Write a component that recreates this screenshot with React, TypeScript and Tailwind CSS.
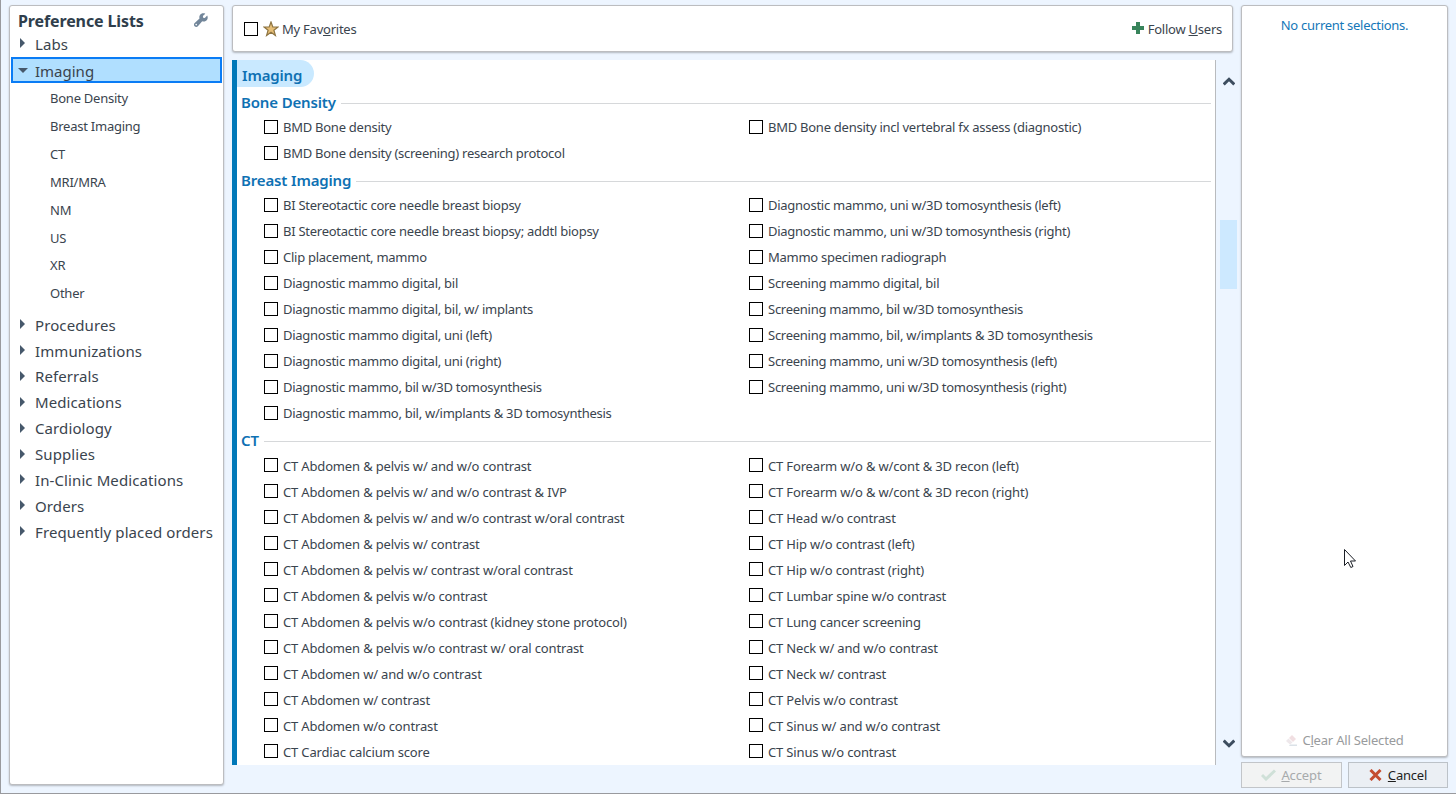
import React from "react";

const boneLeft = ["BMD Bone density", "BMD Bone density (screening) research protocol"];
const boneRight = ["BMD Bone density incl vertebral fx assess (diagnostic)"];
const breastLeft = [
  "BI Stereotactic core needle breast biopsy",
  "BI Stereotactic core needle breast biopsy; addtl biopsy",
  "Clip placement, mammo",
  "Diagnostic mammo digital, bil",
  "Diagnostic mammo digital, bil, w/ implants",
  "Diagnostic mammo digital, uni (left)",
  "Diagnostic mammo digital, uni (right)",
  "Diagnostic mammo, bil w/3D tomosynthesis",
  "Diagnostic mammo, bil, w/implants & 3D tomosynthesis",
];
const breastRight = [
  "Diagnostic mammo, uni w/3D tomosynthesis (left)",
  "Diagnostic mammo, uni w/3D tomosynthesis (right)",
  "Mammo specimen radiograph",
  "Screening mammo digital, bil",
  "Screening mammo, bil w/3D tomosynthesis",
  "Screening mammo, bil, w/implants & 3D tomosynthesis",
  "Screening mammo, uni w/3D tomosynthesis (left)",
  "Screening mammo, uni w/3D tomosynthesis (right)",
];
const ctLeft = [
  "CT Abdomen & pelvis w/ and w/o contrast",
  "CT Abdomen & pelvis w/ and w/o contrast & IVP",
  "CT Abdomen & pelvis w/ and w/o contrast w/oral contrast",
  "CT Abdomen & pelvis w/ contrast",
  "CT Abdomen & pelvis w/ contrast w/oral contrast",
  "CT Abdomen & pelvis w/o contrast",
  "CT Abdomen & pelvis w/o contrast (kidney stone protocol)",
  "CT Abdomen & pelvis w/o contrast w/ oral contrast",
  "CT Abdomen w/ and w/o contrast",
  "CT Abdomen w/ contrast",
  "CT Abdomen w/o contrast",
  "CT Cardiac calcium score",
];
const ctRight = [
  "CT Forearm w/o & w/cont & 3D recon (left)",
  "CT Forearm w/o & w/cont & 3D recon (right)",
  "CT Head w/o contrast",
  "CT Hip w/o contrast (left)",
  "CT Hip w/o contrast (right)",
  "CT Lumbar spine w/o contrast",
  "CT Lung cancer screening",
  "CT Neck w/ and w/o contrast",
  "CT Neck w/ contrast",
  "CT Pelvis w/o contrast",
  "CT Sinus w/ and w/o contrast",
  "CT Sinus w/o contrast",
];
const children = ["Bone Density", "Breast Imaging", "CT", "MRI/MRA", "NM", "US", "XR", "Other"];
const lists = [
  "Procedures",
  "Immunizations",
  "Referrals",
  "Medications",
  "Cardiology",
  "Supplies",
  "In-Clinic Medications",
  "Orders",
  "Frequently placed orders",
];

function Box() {
  return <span className="size-[14px] shrink-0 border border-black bg-white" />;
}

function Option({ label, low }: { label: string; low?: boolean }) {
  return (
    <label className="flex h-[26px] items-center gap-[5px]">
      <Box />
      <span className={low ? "pt-px tracking-[-0.16px]" : "pb-px tracking-[-0.26px]"}>{label}</span>
    </label>
  );
}

function Section({ title, left, right, low }: { title: string; left: string[]; right: string[]; low?: boolean }) {
  return (
    <section>
      <h3 className="flex h-[26px] items-center gap-[5px] pl-1 pt-px text-[15px] font-semibold tracking-[-0.15px] text-[#0f71b3]">
        {title}
        <span className="mt-1 h-px flex-1 bg-[#d6d8da]" />
      </h3>
      <div className="grid grid-cols-[485px_1fr] pl-[27px]">
        <div>{left.map((t) => <Option key={t} label={t} low={low} />)}</div>
        <div>{right.map((t) => <Option key={t} label={t} low={low} />)}</div>
      </div>
    </section>
  );
}

function Arrow() {
  return (
    <svg width="5" height="10" viewBox="0 0 5 10" className="mb-px shrink-0">
      <path d="M0 0L5 5L0 10Z" fill="#46586b" />
    </svg>
  );
}

function ListItem({ label }: { label: string }) {
  return (
    <li className="flex h-[25.88px] items-center gap-[10px] pl-[10px] text-[15px] tracking-[0.1px]">
      <Arrow />
      <span>{label}</span>
    </li>
  );
}

function Chevron({ down }: { down?: boolean }) {
  return (
    <svg width="12" height="9" viewBox="0 0 12 9">
      <path d={down ? "M.7 1.5L6 6.7L11.3 1.5" : "M.7 7.5L6 2.3L11.3 7.5"} fill="none" stroke="#3d4d5f" strokeWidth="3" />
    </svg>
  );
}

export default function App() {
  return (
    <div className="relative flex h-[794px] w-[1456px] overflow-hidden border-b border-l border-[#999a9e] bg-[#edf5ff] pl-2 pt-[5px] font-['Noto_Sans',sans-serif] text-[13px] leading-[18px] tracking-[-0.24px] whitespace-nowrap text-[#3a444e]">
      <aside className="h-[780px] w-[215px] shrink-0 rounded-[3px] border border-[#bcbdc0] bg-white shadow-[0_1px_2px_rgba(0,0,0,0.25)]">
        <div className="flex h-[25px] items-center justify-between pl-2 pr-[15px] pt-1">
          <h2 className="text-base font-bold tracking-[-0.12px] text-[#2f3e4c]">Preference Lists</h2>
          <svg width="14" height="14" viewBox="0 0 14 14" className="mb-0.5">
            <path d="M13.2 2.5L10.8 4.9L9.1 4.7L8.9 3L11.3.7C9.4-.2 7 .3 6 1.9C5.2 3.1 5.2 4.3 5.5 5.4L.7 9.9C-.4 11-.3 12.4.6 13.3C1.6 14.2 3 14.2 3.9 13.2L8.2 8.3C10 8.9 12.1 8.4 13.1 6.8C13.9 5.5 13.9 3.8 13.2 2.5ZM2.2 12.4A.8.8 0 1 1 2.2 10.8A.8.8 0 0 1 2.2 12.4Z" fill="#72869a" />
          </svg>
        </div>
        <ul>
          <ListItem label="Labs" />
        </ul>
        <div className="mx-px flex h-[26px] items-center gap-[7px] border-2 border-[#0a7cf5] bg-[#b0dfff] pl-[5px] pt-[2px] text-[15px] tracking-normal">
          <svg width="10" height="5" viewBox="0 0 10 5" className="mb-px">
            <path d="M0 0H10L5 5Z" fill="#46586b" />
          </svg>
          Imaging
        </div>
        <ul className="pt-px">
          {children.map((c) => (
            <li key={c} className="flex h-[27.86px] items-center pl-10 pt-px">{c}</li>
          ))}
        </ul>
        <ul className="pt-[5px]">
          {lists.map((l) => <ListItem key={l} label={l} />)}
        </ul>
      </aside>

      <main className="ml-2 w-[1001px] shrink-0">
        <header className="flex h-[47px] items-center justify-between rounded-[3px] border border-[#bcbdc0] bg-white pl-[11px] pr-[10px] shadow-[0_1px_2px_rgba(0,0,0,0.25)]">
          <label className="flex items-center">
            <Box />
            <svg width="16" height="16" viewBox="0 0 16 16" className="ml-[5px] mr-[3px]">
              <path d="M8 1L9.8 6H15L10.9 9.2L12.4 14.5L8 11.3L3.6 14.5L5.1 9.2L1 6H6.2Z" fill="#e6be76" stroke="#8d7442" strokeWidth="1.2" />
            </svg>
            <span>My Fav<u className="underline-offset-1">o</u>rites</span>
          </label>
          <button className="flex items-center gap-1 tracking-[-0.24px]">
            <svg width="12" height="12" viewBox="0 0 12 12" className="mb-0.5">
              <path d="M4 0H8V4H12V8H8V12H4V8H0V4H4Z" fill="#38845b" />
            </svg>
            <span>Follow <u className="underline-offset-1">U</u>sers</span>
          </button>
        </header>
        <div className="mt-2 flex h-[705px]">
          <div className="h-full w-[984px] shrink-0 overflow-hidden border-l-[5px] border-r border-l-[#0078b8] border-r-[#b9bbbe] bg-white pr-1">
            <h2 className="mb-px flex h-[27px] w-[77px] items-center rounded-r-full bg-[#c9e9ff] pl-[5px] pt-[3px] text-[15px] font-semibold tracking-[-0.15px] text-[#0f71b3]">
              Imaging
            </h2>
            <Section title="Bone Density" left={boneLeft} right={boneRight} />
            <Section title="Breast Imaging" left={breastLeft} right={breastRight} />
            <Section title="CT" left={ctLeft} right={ctRight} low />
          </div>
          <div className="ml-1 flex w-[17px] shrink-0 flex-col items-center pt-[17px]">
            <Chevron />
            <div className="mt-[134px] h-[69px] w-[17px] shrink-0 bg-[#cde9ff]" />
            <div className="mt-[450px]"><Chevron down /></div>
          </div>
        </div>
      </main>

      <aside className="ml-2 w-[207px] shrink-0">
        <div className="flex h-[752px] flex-col items-center justify-between rounded-[3px] border border-[#bcbdc0] bg-white pb-[7px] pt-[10px] shadow-[0_1px_2px_rgba(0,0,0,0.25)]">
          <p className="tracking-[-0.27px] text-[#1577b8]">No current selections.</p>
          <button className="flex items-center gap-1 tracking-[-0.2px] text-[#999b9d]">
            <svg width="13" height="13" viewBox="0 0 13 13">
              <path d="M7 1L11 5L8 8L4 4Z" fill="#f1dfe2" />
              <path d="M3.5 4.5L7.5 8.5L5 10.5L1 7Z" fill="#eee8eb" />
              <path d="M5 10.5H12V12H4Z" fill="#dbe2e8" />
            </svg>
            <span>C<u className="underline-offset-1">l</u>ear All Selected</span>
          </button>
        </div>
        <div className="mt-[5px] flex gap-[6px]">
          <button className="flex h-[26px] w-[101px] items-center justify-center gap-[5px] border border-[#c2c5c9] bg-[#f2f3f3] tracking-[-0.1px] text-[#a7aaac]">
            <svg width="15" height="12" viewBox="0 0 15 12">
              <path d="M1 6L5 10L14 1.5" fill="none" stroke="#cfe0d8" strokeWidth="3" />
            </svg>
            <span><u className="underline-offset-1">A</u>ccept</span>
          </button>
          <button className="flex h-[26px] w-[100px] items-center justify-center gap-[6px] border border-[#bcc2c8] bg-[#ebeff4] tracking-[-0.2px] text-[#1e1e1e]">
            <svg width="13" height="12" viewBox="0 0 13 12">
              <path d="M1.5 1L11.5 11M11.5 1L1.5 11" stroke="#c44c2f" strokeWidth="3" />
            </svg>
            <span><u className="underline-offset-1">C</u>ancel</span>
          </button>
        </div>
      </aside>

      <svg width="13" height="20" viewBox="0 0 13 20" className="absolute left-[1343px] top-[549px]">
        <path d="M.5 .5V16.5L4 13L6.8 18.5L9 17.5L6.5 12H11.5Z" fill="white" stroke="#1b1f26" strokeWidth="1" />
      </svg>
    </div>
  );
}
